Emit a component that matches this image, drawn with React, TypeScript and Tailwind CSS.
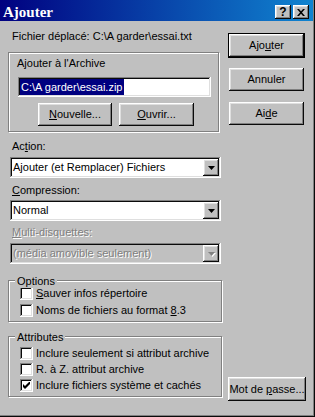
import type { ReactNode } from 'react';

// Win98 bevels
const raised =
  'shadow-[inset_-1px_-1px_#0a0a0a,inset_1px_1px_#ffffff,inset_-2px_-2px_#808080,inset_2px_2px_#dfdfdf]';
const sunken =
  'shadow-[inset_-1px_-1px_#ffffff,inset_1px_1px_#808080,inset_-2px_-2px_#dfdfdf,inset_2px_2px_#0a0a0a]';
const etched = 'border border-[#808080] shadow-[1px_1px_0_#ffffff,inset_1px_1px_0_#ffffff]';
const disabledText = 'text-[#808080] [text-shadow:1px_1px_0_#ffffff]';

function K({ children }: { children: ReactNode }) {
  return <span className="underline decoration-1 underline-offset-[1px]">{children}</span>;
}

function Button({ children, className = '' }: { children: ReactNode; className?: string }) {
  return (
    <button className={`flex shrink-0 items-center justify-center bg-[#c0c0c0] ${raised} ${className}`}>
      <span className="whitespace-nowrap">{children}</span>
    </button>
  );
}

function Arrow({ disabled }: { disabled?: boolean }) {
  return (
    <span className={`flex h-[17px] w-[16px] items-center justify-center bg-[#c0c0c0] ${raised}`}>
      <svg width="7" height="4" viewBox="0 0 7 4" className={disabled ? 'drop-shadow-[1px_1px_0_#ffffff]' : ''}>
        <polygon points="0,0 7,0 3.5,4" fill={disabled ? '#808080' : '#000000'} />
      </svg>
    </span>
  );
}

function Combo({ value, disabled, className = '' }: { value: string; disabled?: boolean; className?: string }) {
  return (
    <div
      className={`ml-[2px] flex h-[21px] w-[211px] items-center p-[2px] ${sunken} ${
        disabled ? 'bg-[#c0c0c0]' : 'bg-white'
      } ${className}`}
    >
      <span className={`flex-1 pl-[1px] ${disabled ? disabledText : ''}`}>{value}</span>
      <Arrow disabled={disabled} />
    </div>
  );
}

function Check({ label, checked }: { label: ReactNode; checked?: boolean }) {
  return (
    <div className="flex h-[13px] items-center gap-[3px]">
      <span className={`flex h-[13px] w-[13px] shrink-0 items-center justify-center bg-white ${sunken}`}>
        {checked && (
          <svg width="7" height="7" viewBox="0 0 7 7">
            <path d="M0 2v3l2 2l5-5v-3l-5 5z" fill="#000000" />
          </svg>
        )}
      </span>
      <span>{label}</span>
    </div>
  );
}

function Group({ title, className, children }: { title: string; className: string; children: ReactNode }) {
  return (
    <div className={`relative flex flex-col ${etched} ${className}`}>
      <span className="absolute left-[6px] top-[-6px] bg-[#c0c0c0] px-[2px]">{title}</span>
      {children}
    </div>
  );
}

export default function App() {
  return (
    <div className="flex h-[417px] w-[315px] flex-col overflow-hidden bg-[#c0c0c0] font-['Liberation_Sans',Arial,sans-serif] text-[11px] leading-[13px] text-black shadow-[inset_-1px_-1px_#0a0a0a,inset_-2px_-2px_#808080]">
      {/* Title bar */}
      <div className="flex h-[21px] w-[313px] items-start bg-[linear-gradient(to_right,#000080,#1084d0)] pl-[3px] pr-[4px] pt-[5px]">
        <span className="flex-1 font-['Liberation_Serif',serif] text-[15px] font-bold leading-[15px] text-white">
          Ajouter
        </span>
        <button className={`flex h-[14px] w-[16px] items-center justify-center bg-[#c0c0c0] text-[12px] font-bold leading-[12px] ${raised}`}>
          ?
        </button>
        <button className={`ml-[2px] flex h-[14px] w-[16px] items-center justify-center bg-[#c0c0c0] ${raised}`}>
          <svg width="8" height="7" viewBox="0 0 8 7">
            <path d="M0 0h2l2 2.3l2-2.3h2l-3 3.5l3 3.5h-2l-2-2.3l-2 2.3h-2l3-3.5z" fill="#000000" />
          </svg>
        </button>
      </div>

      <div className="flex flex-1 pb-[16px] pl-[8px]">
        {/* Left column */}
        <div className="flex w-[214px] flex-col items-start">
          <div className="ml-[4px] mt-[9px] whitespace-nowrap">Fichier déplacé: C:\A garder\essai.txt</div>

          <div className={`mt-[9px] flex h-[80px] w-[211px] flex-col items-start pl-[8px] pt-[4px] ${etched}`}>
            <span>Ajouter à l'Archive</span>
            <div className={`ml-[1px] mt-[7px] flex h-[20px] w-[193px] items-start bg-white p-[2px] ${sunken}`}>
              <span className="h-[16px] bg-[#000080] px-[1px] leading-[16px] text-white">C:\A garder\essai.zip</span>
            </div>
            <div className="ml-[21px] mt-[6px] flex">
              <Button className="h-[23px] w-[74px]">
                <K>N</K>ouvelle...
              </Button>
              <Button className="ml-[7px] h-[23px] w-[75px]">
                <K>O</K>uvrir...
              </Button>
            </div>
          </div>

          <div className="ml-[4px] mt-[8px]">
            Ac<K>t</K>ion:
          </div>
          <Combo className="mt-[4px]" value="Ajouter (et Remplacer) Fichiers" />

          <div className="ml-[4px] mt-[6px]">
            <K>C</K>ompression:
          </div>
          <Combo className="mt-[3px]" value="Normal" />

          <div className={`ml-[4px] mt-[5px] ${disabledText}`}>
            <K>M</K>ulti-disquettes:
          </div>
          <Combo className="mt-[4px]" value="(média amovible seulement)" disabled />

          <Group title="Options" className="mt-[16px] h-[42px] w-[214px] gap-[4px] pl-[11px] pt-[6px]">
            <Check
              label={
                <>
                  <K>S</K>auver infos répertoire
                </>
              }
            />
            <Check
              label={
                <>
                  Noms de fichiers au format <K>8</K>.3
                </>
              }
            />
          </Group>

          <Group title="Attributes" className="mt-[14px] h-[61px] w-[214px] gap-[3px] pl-[11px] pt-[10px]">
            <Check label="Inclure seulement si attribut archive" />
            <Check label="R. à Z. attribut archive" />
            <Check label="Inclure fichiers système et cachés" checked />
          </Group>
        </div>

        {/* Right column */}
        <div className="ml-[6px] flex flex-col items-start">
          <Button className="mt-[12px] h-[25px] w-[77px] border border-black">
            Ajo<K>u</K>ter
          </Button>
          <Button className="ml-[1px] mt-[10px] h-[23px] w-[75px]">Annuler</Button>
          <Button className="ml-[1px] mt-[11px] h-[23px] w-[75px]">
            Ai<K>d</K>e
          </Button>
          <Button className="mt-auto h-[24px] w-[78px]">
            Mot de <K>p</K>asse...
          </Button>
        </div>
      </div>
    </div>
  );
}
